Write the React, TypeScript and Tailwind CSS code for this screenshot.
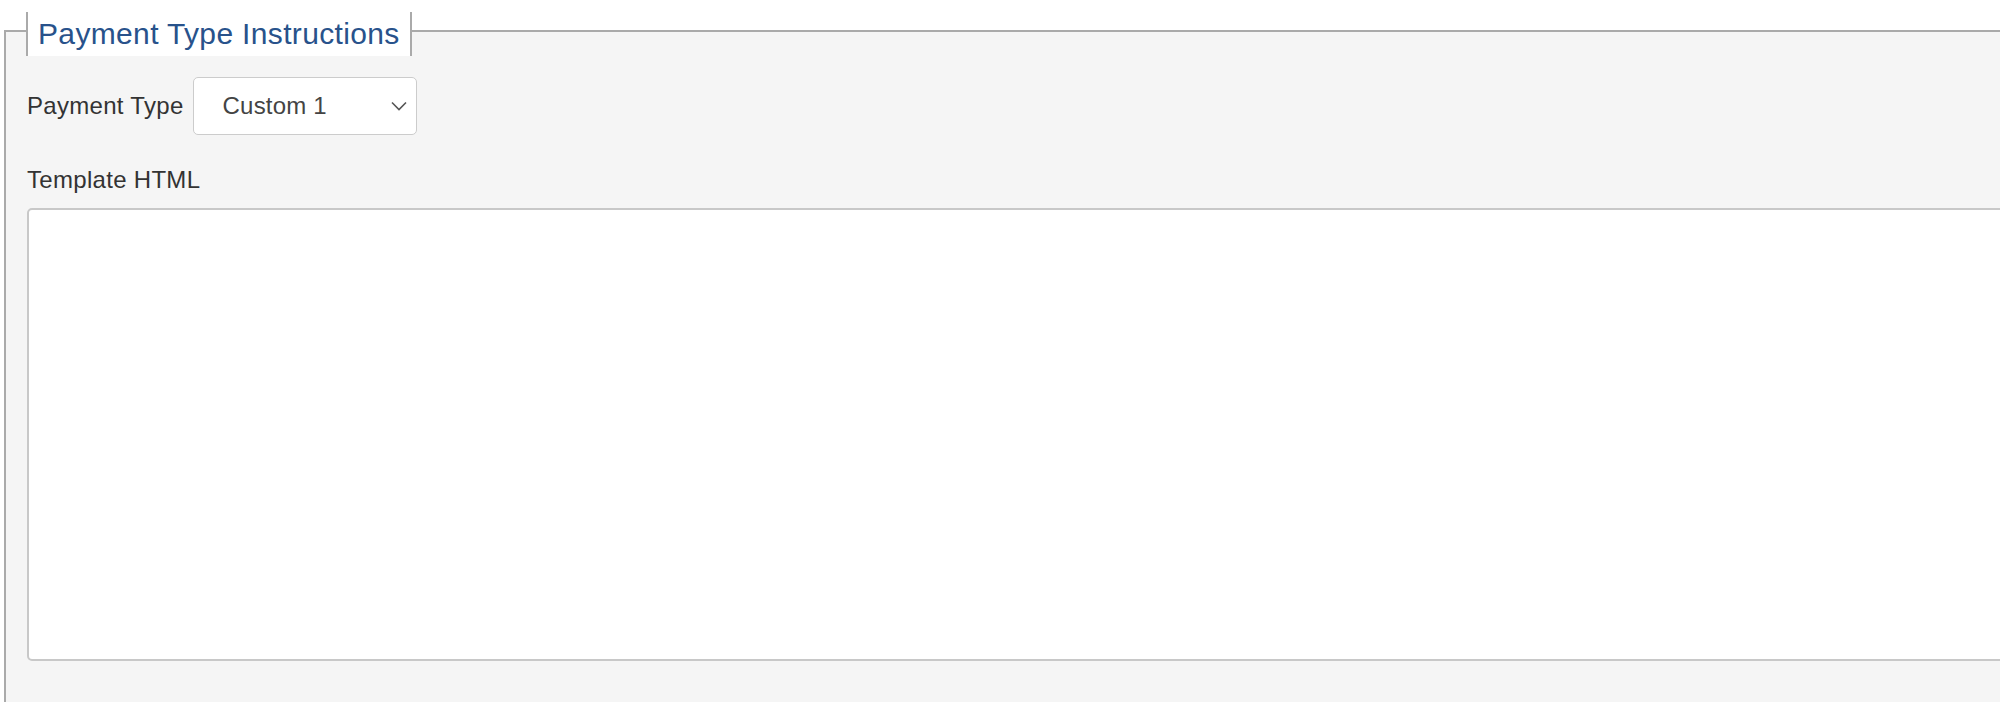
export default function App() {
  return (
    <div className="h-[702px] overflow-hidden bg-white font-['Liberation_Sans',Arial,sans-serif]">
      <fieldset className="ml-[4px] mt-[12px] w-[2400px] min-h-[800px] border-2 border-[#aaaaaa] bg-[#f5f5f5] pl-[21px]">
        <legend className="ml-[-1px] h-[38px]">
          <span className="block h-[44px] border-x-2 border-[#aaaaaa] bg-white px-[10px] text-[30px] leading-[44px] tracking-[0.35px] text-[#28528b]">
            Payment Type Instructions
          </span>
        </legend>

        <div className="mt-[27px] flex items-center gap-[9px]">
          <label className="text-[24px] leading-[30px] tracking-[0.3px] text-[#333333]">Payment Type</label>
          <div className="flex h-[58px] w-[224px] items-center justify-between rounded-[5px] border-[1.5px] border-[#cccccc] bg-white pl-[29px] pr-[9px]">
            <span className="text-[24px] tracking-[0.2px] text-[#444444]">Custom 1</span>
            <svg width="16" height="10" viewBox="0 0 16 10" fill="none">
              <path d="M1 1.5 L8 8.5 L15 1.5" stroke="#555555" strokeWidth="1.6" />
            </svg>
          </div>
        </div>

        <div className="mt-[30px] text-[24px] leading-[30px] tracking-[0.3px] text-[#333333]">Template HTML</div>

        <textarea className="mt-[13px] block h-[453px] w-[2300px] resize-none rounded-[5px] border-2 border-[#c8c8c8] bg-white outline-none" />
      </fieldset>
    </div>
  );
}
